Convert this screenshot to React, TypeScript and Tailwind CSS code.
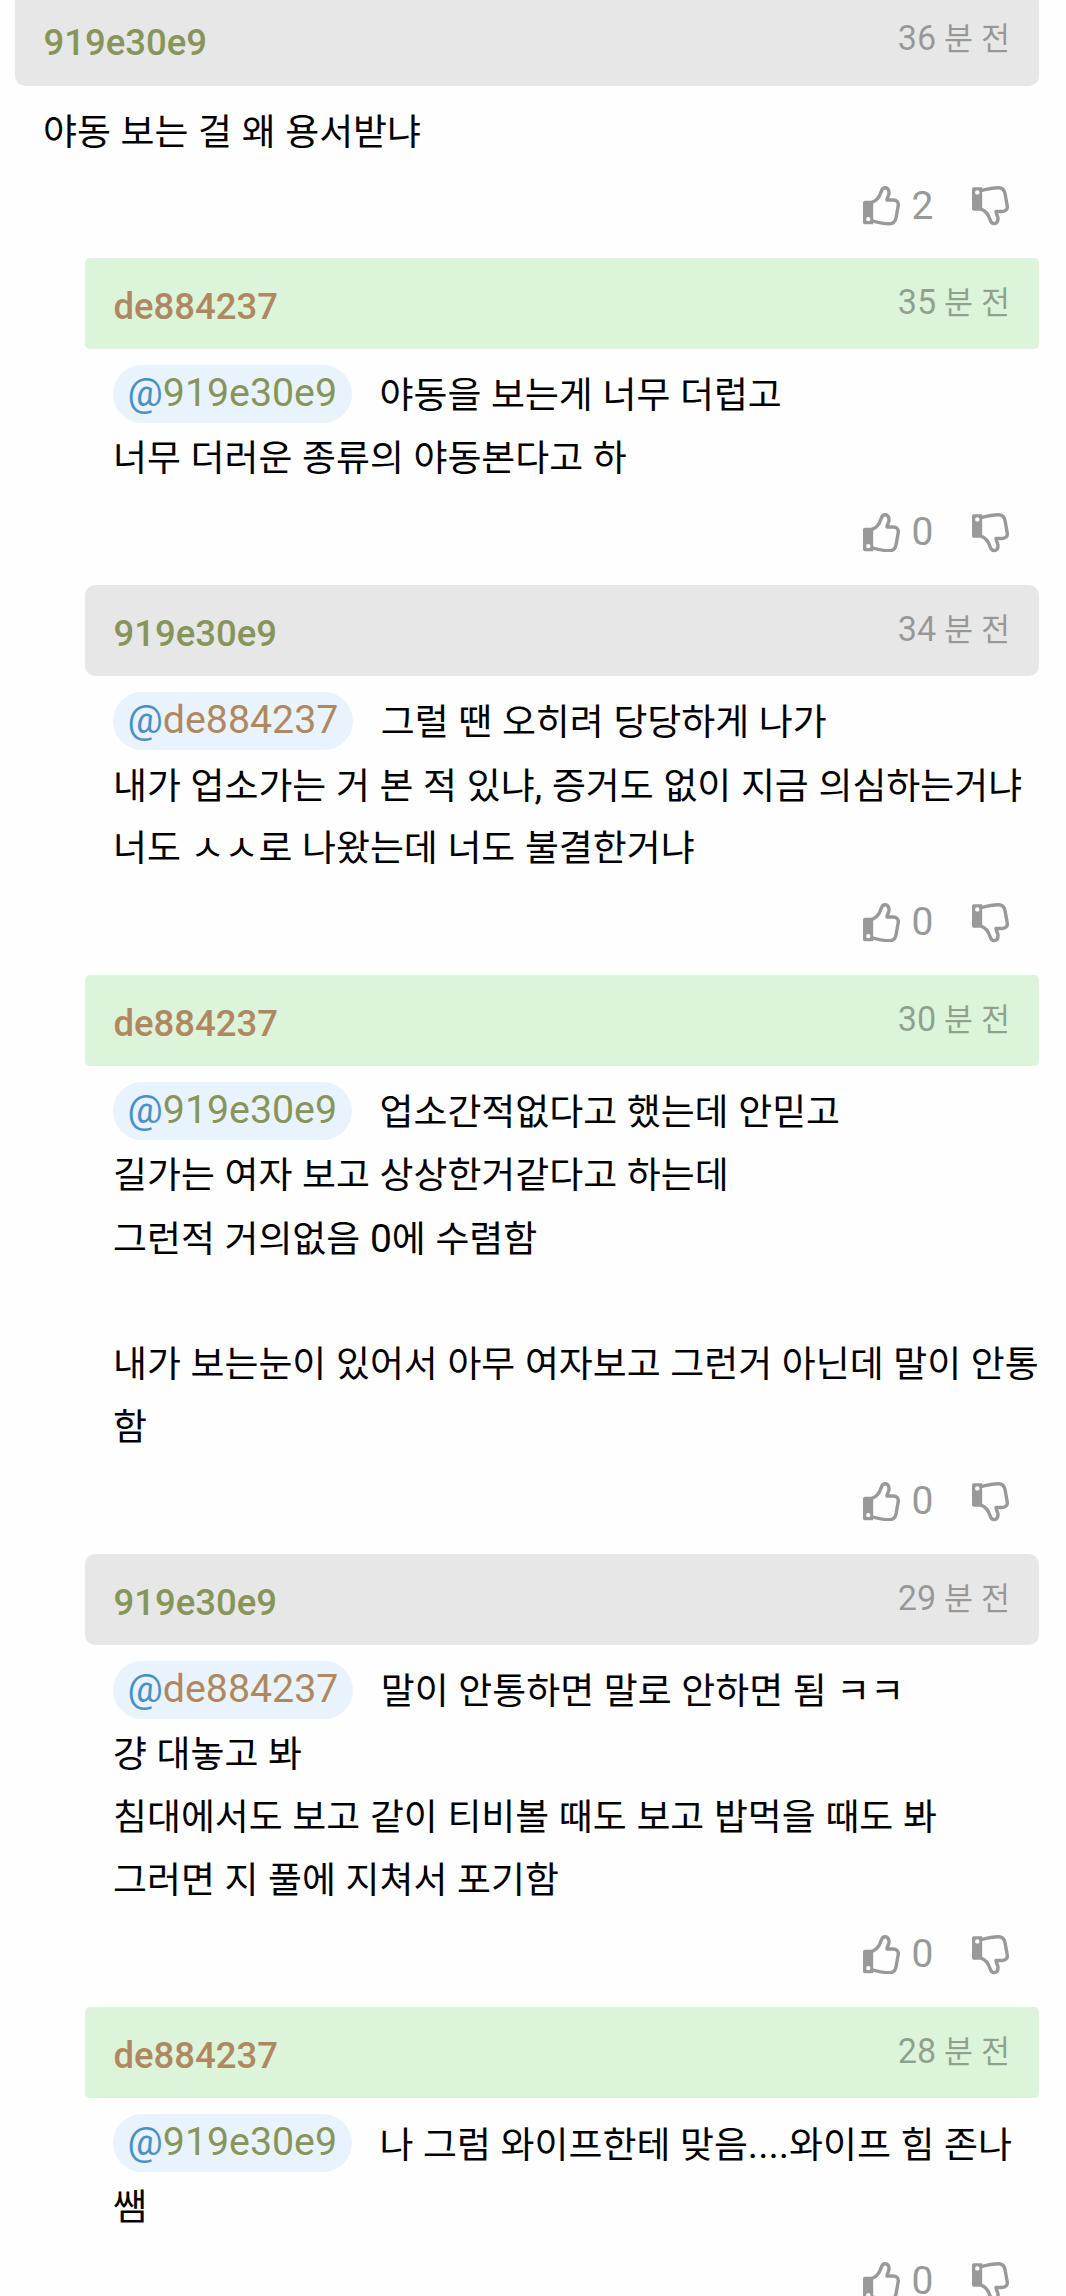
import React from 'react';

type Author = '919e30e9' | 'de884237';

interface Comment {
  author: Author;
  minutes: number;
  mention?: Author;
  lines: string[];
  likes: number;
  reply: boolean;
}

const comments: Comment[] = [
  { author: '919e30e9', minutes: 36, lines: ['야동 보는 걸 왜 용서받냐'], likes: 2, reply: false },
  {
    author: 'de884237',
    minutes: 35,
    mention: '919e30e9',
    lines: ['야동을 보는게 너무 더럽고', '너무 더러운 종류의 야동본다고 하'],
    likes: 0,
    reply: true,
  },
  {
    author: '919e30e9',
    minutes: 34,
    mention: 'de884237',
    lines: ['그럴 땐 오히려 당당하게 나가', '내가 업소가는 거 본 적 있냐, 증거도 없이 지금 의심하는거냐', '너도 ㅅㅅ로 나왔는데 너도 불결한거냐'],
    likes: 0,
    reply: true,
  },
  {
    author: 'de884237',
    minutes: 30,
    mention: '919e30e9',
    lines: [
      '업소간적없다고 했는데 안믿고',
      '길가는 여자 보고 상상한거같다고 하는데',
      '그런적 거의없음 0에 수렴함',
      '',
      '내가 보는눈이 있어서 아무 여자보고 그런거 아닌데 말이 안통',
      '함',
    ],
    likes: 0,
    reply: true,
  },
  {
    author: '919e30e9',
    minutes: 29,
    mention: 'de884237',
    lines: ['말이 안통하면 말로 안하면 됨 ㅋㅋ', '걍 대놓고 봐', '침대에서도 보고 같이 티비볼 때도 보고 밥먹을 때도 봐', '그러면 지 풀에 지쳐서 포기함'],
    likes: 0,
    reply: true,
  },
  {
    author: 'de884237',
    minutes: 28,
    mention: '919e30e9',
    lines: ['나 그럼 와이프한테 맞음....와이프 힘 존나', '쌤'],
    likes: 0,
    reply: true,
  },
];

const nameColor: Record<Author, string> = {
  '919e30e9': 'text-[#87955a]',
  'de884237': 'text-[#b08860]',
};

function Thumb({ down = false }: { down?: boolean }) {
  return (
    <svg viewBox="0 0 37 39.5" className={down ? 'h-[39.5px] w-[37px] -scale-y-100' : 'h-[39.5px] w-[37px]'} fill="none">
      <path
        d="M9 16.4C13 15 16.6 10.4 18 6C19 2.8 20 1.8 22 1.8C25 1.8 26.2 4.4 26 7.4C25.8 9.8 24.2 11 24 14H30C33.8 14 35.8 16.2 35.2 19.7L33 32C32.2 36 30.4 37.7 26.4 37.7C20 37.7 15 36.4 9 34.8"
        stroke="#999"
        strokeWidth="3.4"
        strokeLinejoin="round"
      />
      <path
        fillRule="evenodd"
        fill="#999"
        d="M1.8 14.7H10.2V38.2H1.8A1.8 1.8 0 0 1 0 36.4V16.5A1.8 1.8 0 0 1 1.8 14.7ZM5.3 30.9A2.2 2.2 0 1 0 5.3 35.3A2.2 2.2 0 1 0 5.3 30.9Z"
      />
    </svg>
  );
}

/* Latin digits and punctuation run slightly larger than the Hangul around them. */
function Line({ text }: { text: string }) {
  return (
    <>
      {text.split(/([0-9.,]+)/).map((part, i) =>
        i % 2 ? (
          <span key={i} className="text-[39px]">
            {part}
          </span>
        ) : (
          part
        ),
      )}
    </>
  );
}

function CommentItem({ author, minutes, mention, lines, likes, reply }: Comment) {
  const op = author === 'de884237';
  return (
    <article className={reply ? 'ml-[85px]' : 'ml-[15px]'}>
      <header
        className={`flex items-center justify-between pr-[29px] pl-[28.5px] ${reply ? 'h-[91px]' : 'h-[93px]'} ${
          op ? 'rounded-[5px] bg-[#dbf4da]' : 'rounded-[10px] bg-[#e7e7e7]'
        }`}
      >
        <span className={`pt-[8px] text-[36.5px] leading-none font-medium ${nameColor[author]}`}>{author}</span>
        <time className="pb-[2px] text-[31.6px] leading-none whitespace-pre text-black/35">
          <span className="text-[34.2px]">{minutes}</span> 분 전
        </time>
      </header>
      <div className="pt-[13px] pl-7 text-[36.9px] whitespace-nowrap text-black [word-spacing:0.5px]">
        {lines.map((line, i) => (
          <p key={i} className="flex h-[63px] items-center leading-none">
            {i === 0 && mention && (
              <span className="mr-[28px] flex h-[58px] items-center rounded-full bg-[#e9f3fd] px-[14.5px] text-[39.3px] text-[#4c8fc6]">
                @<span className={nameColor[mention]}>{mention}</span>
              </span>
            )}
            <span className="pt-[6px]">
              <Line text={line} />
            </span>
          </p>
        ))}
      </div>
      <footer
        className={`flex items-center justify-end pr-[30.5px] text-[39px] leading-none text-[#999] ${
          reply ? 'h-[97px] pb-[8px]' : 'h-[96px] pb-[8px]'
        }`}
      >
        <Thumb />
        <span className="mr-[38px] ml-3">{likes}</span>
        <Thumb down />
      </footer>
    </article>
  );
}

export default function App() {
  return (
    <main className="h-[2296px] w-[1066px] overflow-hidden bg-[#fefefe] pr-[27px] font-['Roboto','Noto_Sans_CJK_KR',sans-serif]">
      <div className="-mt-[7px]">
        {comments.map((comment) => (
          <CommentItem key={comment.minutes} {...comment} />
        ))}
      </div>
    </main>
  );
}
